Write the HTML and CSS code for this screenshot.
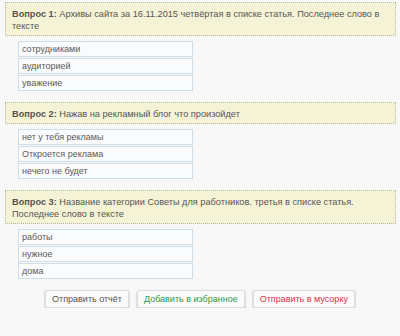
FILE: index.html
```html
<!DOCTYPE html>
<html lang="ru">

<head>
    <meta charset="UTF-8">
    <title>Вопросы</title>
    <link rel="stylesheet" href="styles.css">
</head>

<body>
    <div class="quiz">
        <div class="question">
            <b>Вопрос 1:</b> Архивы сайта за 16.11.2015 четвёртая в списке статья. Последнее слово в тексте
        </div>
        <div class="answers">
            <div class="answer">сотрудниками</div>
            <div class="answer">аудиторией</div>
            <div class="answer">уважение</div>
        </div>

        <div class="question">
            <b>Вопрос 2:</b> Нажав на рекламный блог что произойдет
        </div>
        <div class="answers">
            <div class="answer">нет у тебя рекламы</div>
            <div class="answer">Откроется реклама</div>
            <div class="answer">нечего не будет</div>
        </div>

        <div class="question">
            <b>Вопрос 3:</b> Название категории Советы для работников. третья в списке статья. Последнее слово в тексте
        </div>
        <div class="answers">
            <div class="answer">работы</div>
            <div class="answer">нужное</div>
            <div class="answer">дома</div>
        </div>
    </div>

    <div class="actions">
        <button class="btn">Отправить отчёт</button>
        <button class="btn btn-fav">Добавить в избранное</button>
        <button class="btn btn-trash">Отправить в мусорку</button>
    </div>
</body>

</html>
```

FILE: styles.css
```css
body {
    font-family: "Liberation Sans", Arial, sans-serif;
    font-size: 9px;
    color: #555;
    background-color: #f8f8f8;
    margin: 0;
    padding: 2px 0 0;
}

.quiz {
    padding: 0 4px 0 5px;
}

.question {
    background-color: #f5f3d6;
    border: 1px dotted #b5b5a8;
    padding: 5px 6px 3px;
    line-height: 12px;
    font-size: 9.2px;
}

.question b {
    color: #555;
}

.answers {
    display: flex;
    flex-direction: column;
    gap: 1px;
    width: 175px;
    margin: 5px 0 11px 13px;
}

.answer {
    height: 14px;
    line-height: 14px;
    padding: 0 3px;
    font-size: 9px;
    color: #5a5a5a;
    background-color: #fafbfc;
    border: 1px solid #cfdde8;
}

.actions {
    display: flex;
    justify-content: center;
    gap: 8px;
    margin-top: 5px;
}

.btn {
    font-family: "Liberation Sans", Arial, sans-serif;
    font-size: 9px;
    color: #555;
    height: 18px;
    padding: 0 6px;
    background-color: #fafafa;
    border: 1px solid #ddd;
    border-radius: 2px;
    box-shadow: 0 1px 2px rgba(0, 0, 0, 0.35);
    cursor: pointer;
}

.btn-fav {
    color: #2f9a48;
}

.btn-trash {
    color: #d8344a;
}
```
